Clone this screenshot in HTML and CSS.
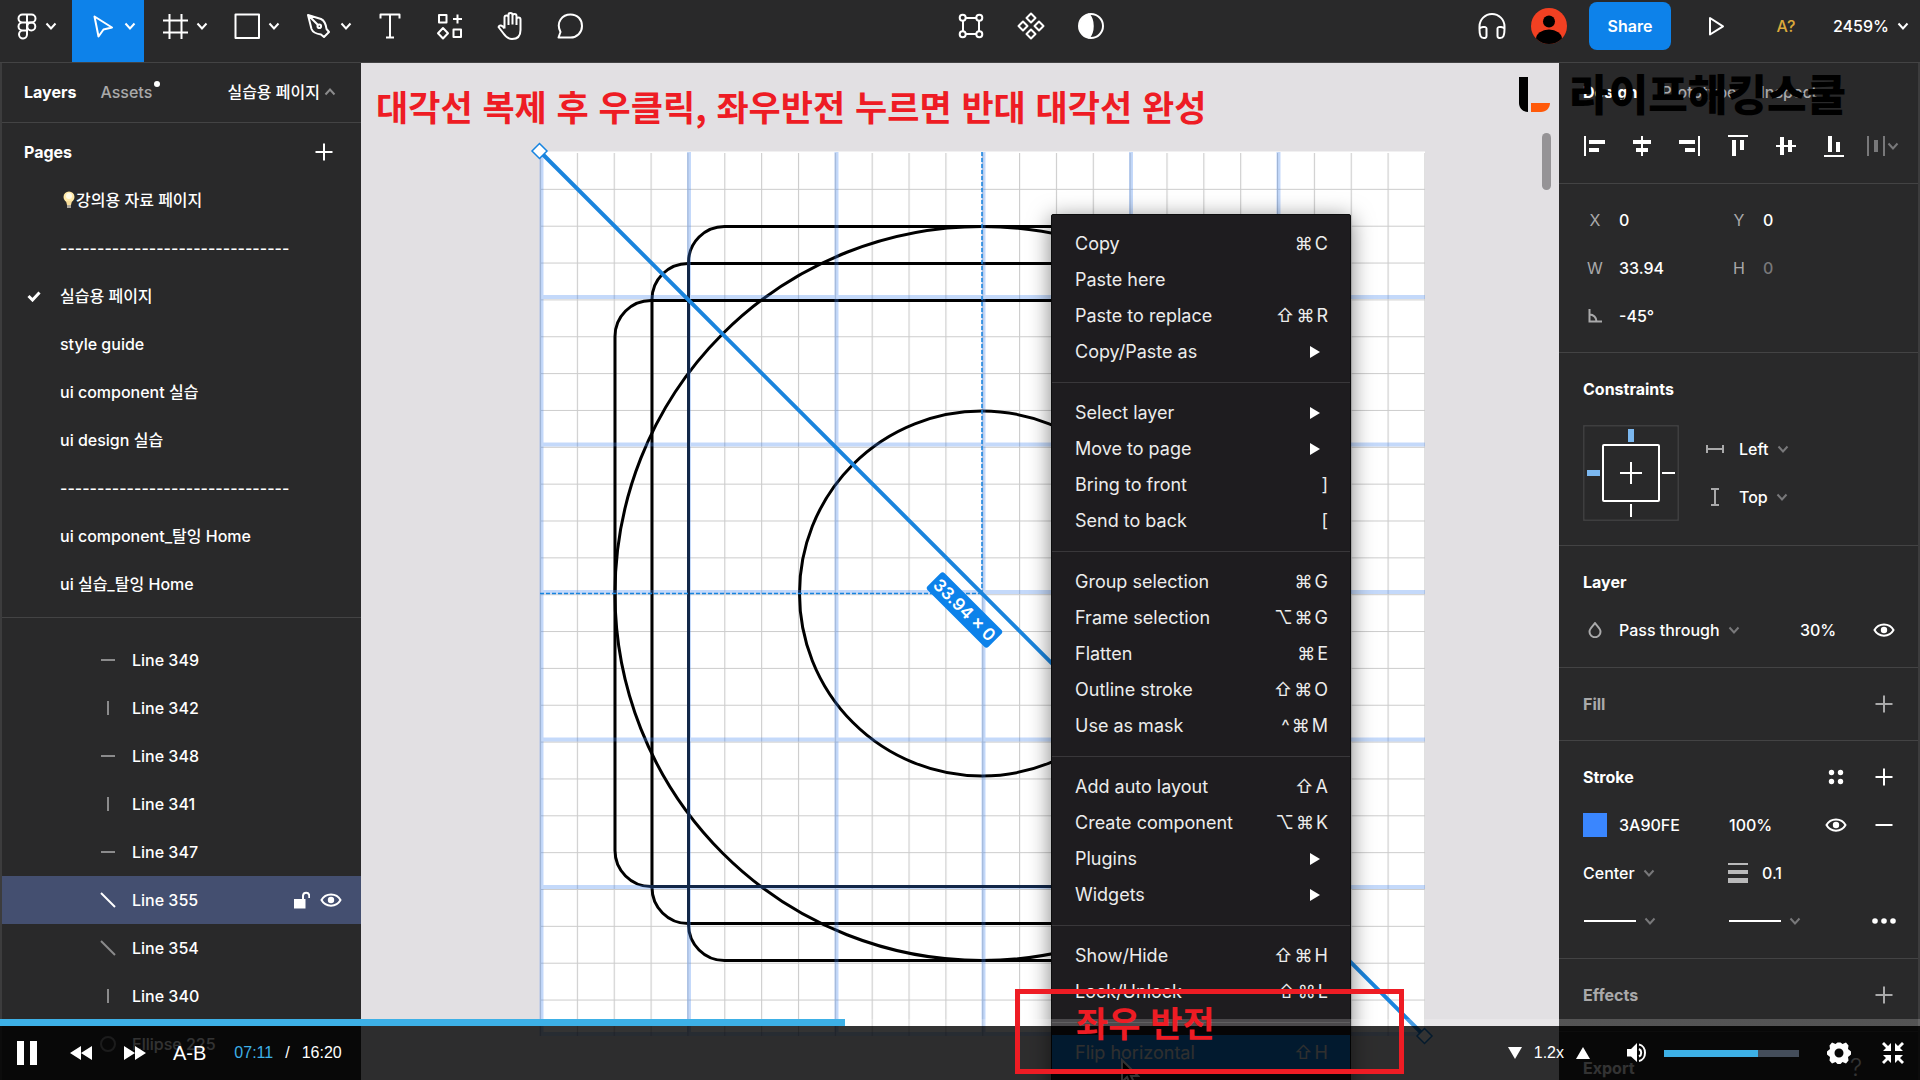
FILE: index.html
```html
<!DOCTYPE html>
<html lang="ko">
<head>
<meta charset="utf-8">
<title>아이콘 그리드 강의</title>
<link rel="stylesheet" href="styles.css">
</head>
<body>
<svg class="defs" aria-hidden="true">
  <symbol id="chev" viewBox="0 0 12 12"><path d="M1.500 3.500 6 8.500l4.500-5" /></symbol>
  <symbol id="plus" viewBox="0 0 20 20"><path d="M10 1.500v17M1.500 10h17"/></symbol>
  <symbol id="eye" viewBox="0 0 22 16"><path d="M1.500 8C5.500.5 16.500.5 20.500 8 16.500 15.500 5.500 15.500 1.500 8z"/><circle cx="11" cy="8" r="3.200" fill="currentColor" stroke="none"/></symbol>
  <symbol id="lh" viewBox="0 0 16 16"><path d="M1 8h14"/></symbol>
  <symbol id="lv" viewBox="0 0 16 16"><path d="M8 1v14"/></symbol>
  <symbol id="ld" viewBox="0 0 16 16"><path d="M1 1l14 14"/></symbol>
</svg>

<div class="app">
  <header class="topbar">
    <div class="tools">
      <button class="tool brand" aria-label="메뉴">
        <svg class="ic" viewBox="0 0 28 28"><path d="M14 2.500H9.500a4 4 0 0 0 0 8H14zM14 2.500h4.500a4 4 0 0 1 0 8H14zM14 10.500H9.500a4 4 0 0 0 0 8H14zM9.500 18.500a4 4 0 1 0 4.500 4v-4z"/><circle cx="18.300" cy="14.500" r="4"/></svg>
        <svg class="chev"><use href="#chev"/></svg>
      </button>
      <button class="tool wide active" aria-label="이동">
        <svg class="ic" viewBox="0 0 28 28"><path d="M5.500 4.500 23 15.500l-8.500 2-5 7z"/></svg>
        <svg class="chev"><use href="#chev"/></svg>
      </button>
      <button class="tool wide" aria-label="프레임">
        <svg class="ic" viewBox="0 0 28 28"><path d="M8.500 2v25M20.500 2v25M2 8.500h25M2 20.500h25"/></svg>
        <svg class="chev"><use href="#chev"/></svg>
      </button>
      <button class="tool wide" aria-label="도형">
        <svg class="ic" viewBox="0 0 28 28"><path d="M2.500 2.500h23.500v23.500H2.500z"/></svg>
        <svg class="chev"><use href="#chev"/></svg>
      </button>
      <button class="tool wide" aria-label="펜">
        <svg class="ic" viewBox="0 0 28 28"><path d="M3 3l13 4c4 2 5 6 5.500 10l2.500 3-5 5-3-2.500c-4-.5-8-1.500-9.500-5.500zM3 3l10 10"/><circle cx="14.300" cy="14.300" r="1.800"/></svg>
        <svg class="chev"><use href="#chev"/></svg>
      </button>
      <button class="tool" aria-label="텍스트">
        <svg class="ic" viewBox="0 0 28 28"><path d="M4.500 6.500V2.500h19v4M14 2.500v23M10 25.500h8"/></svg>
      </button>
      <button class="tool" aria-label="리소스">
        <svg class="ic" viewBox="0 0 28 28"><path d="M3 3h7.500v7.500H3zM17.500 17.500H25V25h-7.500zM7 16l5 5.200-5 5.300-5-5.300zM21.500 2.500v9M17 7h9"/></svg>
      </button>
      <button class="tool" aria-label="손">
        <svg class="ic" viewBox="0 0 28 28"><path d="M8.500 16.500V5.500a2 2 0 0 1 4 0V13M12.500 12V3a2 2 0 0 1 4 0v9.500M16.500 12V4a2 2 0 0 1 4 0v9M20.500 13V7.500a2 2 0 0 1 4 0V18c0 6-3.500 9-8.500 9-4.500 0-6.500-2.500-8.500-5.500l-5-6.500c1-2.500 3.500-2 6 1.500"/></svg>
      </button>
      <button class="tool" aria-label="댓글">
        <svg class="ic" viewBox="0 0 28 28"><path d="M2.500 25.500 4.500 20C-.5 10 6.500 2.500 14.500 2.500c7 0 11.500 5 11.500 11.500s-5 11.500-11.500 11.500z"/></svg>
      </button>
    </div>
    <div class="tools">
      <button class="tool" aria-label="개체 편집">
        <svg class="ic" viewBox="0 0 28 28"><path d="M8.500 6h11M8.500 22h11M6 8.500v11M22 8.500v11"/><circle cx="5.700" cy="5.700" r="3"/><circle cx="22.300" cy="5.700" r="3"/><circle cx="5.700" cy="22.300" r="3"/><circle cx="22.300" cy="22.300" r="3"/></svg>
      </button>
      <button class="tool" aria-label="컴포넌트">
        <svg class="ic" viewBox="0 0 28 28"><path d="M14 1.500 18.500 6 14 10.500 9.500 6zM14 17.500l4.500 4.500-4.500 4.500L9.500 22zM6 9.500l4.500 4.500L6 18.500 1.500 14zM22 9.500l4.500 4.500-4.500 4.500-4.500-4.500z"/></svg>
      </button>
      <button class="tool" aria-label="마스크">
        <svg class="ic" viewBox="0 0 28 28"><circle cx="14" cy="14" r="12"/><path d="M12 2.500c5 6 5 17 0 23a12 12 0 0 1 0-23z" fill="currentColor"/></svg>
      </button>
    </div>
    <div class="tools">
      <button class="tool" aria-label="오디오">
        <svg class="ic" viewBox="0 0 28 28"><path d="M1.500 17V14.500a12.500 12.500 0 0 1 25 0V17M1.500 17c0-1.500 7-3.500 7-.5v7.500c0 3-5 2.500-6 0-1-2-1-5-1-7zM26.500 17c0-1.500-7-3.500-7-.5v7.500c0 3 5 2.500 6 0 1-2 1-5 1-7z"/></svg>
      </button>
      <svg class="avatar" viewBox="0 0 36 36"><clipPath id="ac"><circle cx="18" cy="18" r="18"/></clipPath><g clip-path="url(#ac)"><path fill="#f24022" d="M0 0h36v36H0z"/><circle cx="18" cy="13.500" r="6"/><ellipse cx="18" cy="31" rx="13" ry="9.500"/></g></svg>
      <button class="share">Share</button>
      <button class="tool" aria-label="재생">
        <svg class="ic" viewBox="0 0 28 28"><path d="M8 6v16.500l13-8.200z"/></svg>
      </button>
      <button class="tool missing">A?</button>
      <label class="pick zoom"><select aria-label="확대"><option>2459%</option></select><svg class="chev"><use href="#chev"/></svg></label>
    </div>
  </header>

  <aside class="left">
    <div class="tabs">
      <button class="tab on">Layers</button>
      <button class="tab assets">Assets</button>
      <button class="tab page">실습용 페이지<svg class="chev up"><use href="#chev"/></svg></button>
    </div>
    <section class="pages">
      <div class="head"><h2>Pages</h2><button class="mini" aria-label="페이지 추가"><svg class="plus"><use href="#plus"/></svg></button></div>
      <ul>
        <li><svg class="bulb" viewBox="0 0 12 18"><circle cx="6" cy="6" r="5.500" fill="#ffe9a8"/><circle cx="6" cy="5" r="3" fill="#fffbe8"/><path d="M3 10h6l-1 4H4z" fill="#f6dc9a"/><path d="M4 14h4v3H4z" fill="#aaa59b"/></svg>강의용 자료 페이지</li>
        <li>-------------------------------</li>
        <li class="cur"><svg class="check" viewBox="0 0 14 12"><path d="M1.500 6l4 4 7-7.500"/></svg>실습용 페이지</li>
        <li>style guide</li>
        <li>ui component 실습</li>
        <li>ui design 실습</li>
        <li>-------------------------------</li>
        <li>ui component_탈잉 Home</li>
        <li>ui 실습_탈잉 Home</li>
      </ul>
    </section>
    <ul class="layers">
      <li><svg><use href="#lh"/></svg>Line 349</li>
      <li><svg><use href="#lv"/></svg>Line 342</li>
      <li><svg><use href="#lh"/></svg>Line 348</li>
      <li><svg><use href="#lv"/></svg>Line 341</li>
      <li><svg><use href="#lh"/></svg>Line 347</li>
      <li class="sel"><svg><use href="#ld"/></svg><span>Line 355</span>
        <button class="mini" aria-label="잠금"><svg class="lock" viewBox="0 0 16 18"><path d="M0 8h11.500v9.500H0z" fill="currentColor" stroke="none"/><path d="M9 8V4.500a3.200 3.200 0 0 1 6.300 0V7"/></svg></button>
        <button class="mini" aria-label="표시"><svg class="eye"><use href="#eye"/></svg></button></li>
      <li><svg><use href="#ld"/></svg>Line 354</li>
      <li><svg><use href="#lv"/></svg>Line 340</li>
      <li><svg viewBox="0 0 16 16"><circle cx="8" cy="8" r="7"/></svg>Ellipse 225</li>
    </ul>
  </aside>

  <main class="canvas">
    <svg class="board" width="1199" height="1017" viewBox="361 63 1199 1017">
      <defs>
        <pattern id="grid" x="540" y="152" width="36.850" height="36.850" patternUnits="userSpaceOnUse"><path d="M0 .5h37M.5 0v37" stroke="#000" stroke-opacity=".2" stroke-width="1.200"/></pattern>
      </defs>
      <path fill="#fff" d="M540 151.500h885V1036H540z"/>
      <path fill="url(#grid)" d="M540 153h885v883H540z"/>
      <g fill="none" stroke="#000" stroke-width="3">
        <rect x="688.500" y="226.500" width="587" height="734" rx="36"/>
        <rect x="652" y="263.500" width="660" height="660" rx="36"/>
        <rect x="615" y="300.500" width="734" height="586" rx="36"/>
        <circle cx="982" cy="593.500" r="367"/>
        <circle cx="982" cy="593.500" r="182.500"/>
      </g>
      <path stroke="#3a82f0" stroke-opacity=".3" stroke-width="4" d="M541.500 152v884M689 152v884M836.500 152v884M983.500 152v884M1131 152v884M1278.500 152v884M540 297h885M540 444.500h885M540 592h885M540 739.500h885M540 887h885M540 1034h885"/>
      <path stroke="#1784e0" stroke-width="1.500" stroke-dasharray="4 2" d="M982 152v441M540 593.500h442"/>
      <path stroke="#1a84dd" stroke-width="4" d="M539.500 151 1424.500 1036"/>
      <path fill="#fff" stroke="#1784e0" stroke-width="1.500" d="M539.500 143.500l7.500 7.500-7.500 7.500-7.500-7.500zM1424.500 1028.500l7.500 7.500-7.500 7.500-7.500-7.500z"/>
      <g transform="translate(964.500 610) rotate(45)"><rect x="-43" y="-12" width="86" height="24" rx="3" fill="#0d82ea"/><text class="size" y="6">33.94 × 0</text></g>
    </svg>
    <div class="scroll"></div>
    <p class="note">대각선 복제 후 우클릭, 좌우반전 누르면 반대 대각선 완성</p>

    <div class="menu" role="menu">
      <button role="menuitem">Copy<kbd><i>⌘</i><i>C</i></kbd></button>
      <button role="menuitem">Paste here</button>
      <button role="menuitem">Paste to replace<kbd><i>⇧</i><i>⌘</i><i>R</i></kbd></button>
      <button role="menuitem" class="sub">Copy/Paste as</button>
      <hr>
      <button role="menuitem" class="sub">Select layer</button>
      <button role="menuitem" class="sub">Move to page</button>
      <button role="menuitem">Bring to front<kbd>]</kbd></button>
      <button role="menuitem">Send to back<kbd>[</kbd></button>
      <hr>
      <button role="menuitem">Group selection<kbd><i>⌘</i><i>G</i></kbd></button>
      <button role="menuitem">Frame selection<kbd><i>⌥</i><i>⌘</i><i>G</i></kbd></button>
      <button role="menuitem">Flatten<kbd><i>⌘</i><i>E</i></kbd></button>
      <button role="menuitem">Outline stroke<kbd><i>⇧</i><i>⌘</i><i>O</i></kbd></button>
      <button role="menuitem">Use as mask<kbd><i>^</i><i>⌘</i><i>M</i></kbd></button>
      <hr>
      <button role="menuitem">Add auto layout<kbd><i>⇧</i><i>A</i></kbd></button>
      <button role="menuitem">Create component<kbd><i>⌥</i><i>⌘</i><i>K</i></kbd></button>
      <button role="menuitem" class="sub">Plugins</button>
      <button role="menuitem" class="sub">Widgets</button>
      <hr>
      <button role="menuitem">Show/Hide<kbd><i>⇧</i><i>⌘</i><i>H</i></kbd></button>
      <button role="menuitem">Lock/Unlock<kbd><i>⇧</i><i>⌘</i><i>L</i></kbd></button>
      <hr>
      <button role="menuitem" class="hot">Flip horizontal<kbd><i>⇧</i><i>H</i></kbd></button>
      <svg class="cursor" viewBox="0 0 20 30"><path d="M2 2v22l5-5 4 9 4-2-4-8h7z" fill="#000" stroke="#fff" stroke-width="2"/></svg>
    </div>
  </main>

  <aside class="right">
    <div class="tabs">
      <button class="tab on">Design</button>
      <button class="tab">Prototype</button>
      <button class="tab">Inspect</button>
    </div>
    <div class="align">
      <button aria-label="왼쪽"><svg viewBox="0 0 22 22"><path d="M1 1h2v20H1zM6 5h16v4H6zM6 13h10v4H6z"/></svg></button>
      <button aria-label="가로 가운데"><svg viewBox="0 0 22 22"><path d="M10 1h2v20h-2zM2 5h18v4H2zM5 13h12v4H5z"/></svg></button>
      <button aria-label="오른쪽"><svg viewBox="0 0 22 22"><path d="M19 1h2v20h-2zM0 5h16v4H0zM6 13h10v4H6z"/></svg></button>
      <button aria-label="위"><svg viewBox="0 0 22 22"><path d="M1 0h20v2H1zM5 5h4v16H5zM13 5h4v10h-4z"/></svg></button>
      <button aria-label="세로 가운데"><svg viewBox="0 0 22 22"><path d="M1 10h20v2H1zM5 2h4v18H5zM13 5h4v12h-4z"/></svg></button>
      <button aria-label="아래"><svg viewBox="0 0 22 22"><path d="M1 20h20v2H1zM5 1h4v16H5zM13 7h4v10h-4z"/></svg></button>
      <button class="dim" aria-label="간격"><svg viewBox="0 0 22 22"><path d="M2 1h2v20H2zM18 1h2v20h-2zM9 5h4v12H9z"/></svg><svg class="chev"><use href="#chev"/></svg></button>
    </div>
    <section class="grid">
      <label><span>X</span><input value="0"></label>
      <label><span>Y</span><input value="0"></label>
      <label><span>W</span><input value="33.94"></label>
      <label><span>H</span><input class="off" value="0"></label>
      <label><span><svg class="ang" viewBox="0 0 14 14"><path d="M1.500 0v12.500H14M1.500 5.500c4 0 7 3 7 7"/></svg></span><input aria-label="회전" value="-45°"></label>
    </section>
    <section>
      <div class="row"><h2>Constraints</h2></div>
      <div class="cons">
        <svg class="cbox" viewBox="0 0 96 96"><rect x=".5" y=".5" width="95" height="95" rx="2" fill="none" stroke="#3e3e3f"/><rect x="20" y="20" width="56" height="56" rx="1" fill="none" stroke="#fff" stroke-width="2"/><path fill="#7bb7ef" d="M45 4h6v13h-6zM4 45h13v6H4z"/><path stroke="#fff" stroke-width="2" d="M37 48h22M48 37v22M79 48h13M48 79v13"/></svg>
        <div class="picks">
          <label class="pick"><svg class="cic" viewBox="0 0 18 18"><path d="M1 5v8M17 5v8M1 9h16"/></svg><select aria-label="가로 제약"><option>Left</option></select><svg class="chev"><use href="#chev"/></svg></label>
          <label class="pick"><svg class="cic" viewBox="0 0 18 18"><path d="M5 1h8M5 17h8M9 1v16"/></svg><select aria-label="세로 제약"><option>Top</option></select><svg class="chev"><use href="#chev"/></svg></label>
        </div>
      </div>
    </section>
    <section class="roomy">
      <div class="row"><h2>Layer</h2></div>
      <div class="row">
        <label class="pick blend"><svg class="drop" viewBox="0 0 14 16"><path d="M7 1.200C9 4 12.500 6.500 12.500 9.700a5.500 5.500 0 0 1-11 0C1.500 6.500 5 4 7 1.200z"/></svg><select aria-label="혼합 모드"><option>Pass through</option></select><svg class="chev"><use href="#chev"/></svg></label>
        <input class="pct" aria-label="불투명도" value="30%">
        <button class="mini push" aria-label="표시"><svg class="eye"><use href="#eye"/></svg></button>
      </div>
    </section>
    <section>
      <div class="row"><h2 class="off">Fill</h2><button class="mini push off" aria-label="추가"><svg class="plus"><use href="#plus"/></svg></button></div>
    </section>
    <section class="roomy">
      <div class="row"><h2>Stroke</h2>
        <button class="mini push" aria-label="스타일"><svg class="dots4" viewBox="0 0 16 16"><circle cx="3.500" cy="3.500" r="2.700"/><circle cx="12.500" cy="3.500" r="2.700"/><circle cx="3.500" cy="12.500" r="2.700"/><circle cx="12.500" cy="12.500" r="2.700"/></svg></button>
        <button class="mini" aria-label="추가"><svg class="plus"><use href="#plus"/></svg></button></div>
      <div class="row"><span class="swatch"></span><input class="hex" aria-label="색상" value="3A90FE"><input class="pct" aria-label="색 불투명도" value="100%">
        <button class="mini push" aria-label="표시"><svg class="eye"><use href="#eye"/></svg></button>
        <button class="mini" aria-label="제거"><svg class="plus" viewBox="0 0 20 20"><path d="M1.500 10h17"/></svg></button></div>
      <div class="row"><label class="pick half"><select aria-label="정렬"><option>Center</option></select><svg class="chev"><use href="#chev"/></svg></label>
        <label class="weight"><svg viewBox="0 0 20 20"><path d="M0 0h20v2H0zM0 7h20v4H0zM0 15h20v5H0z"/></svg><input aria-label="두께" value="0.1"></label></div>
      <div class="row"><button class="pick half" aria-label="시작점"><span class="dash"></span><svg class="chev"><use href="#chev"/></svg></button>
        <button class="pick" aria-label="끝점"><span class="dash"></span><svg class="chev"><use href="#chev"/></svg></button>
        <button class="mini push" aria-label="더보기"><svg class="more" viewBox="0 0 24 6"><circle cx="3" cy="3" r="2.800"/><circle cx="12" cy="3" r="2.800"/><circle cx="21" cy="3" r="2.800"/></svg></button></div>
    </section>
    <section>
      <div class="row"><h2 class="off">Effects</h2><button class="mini push off" aria-label="추가"><svg class="plus"><use href="#plus"/></svg></button></div>
    </section>
    <section>
      <div class="row"><h2>Export</h2><span class="help">?</span></div>
    </section>
  </aside>
</div>

<div class="logo"><svg viewBox="0 0 32 36"><path d="M0 0h9v35C4 35 0 31 0 26z"/><path fill="#ff5a0a" d="M12 26h19c0 5-4 9-9 9H12z"/></svg><span>라이프해킹스쿨</span></div>

<footer class="player">
  <input type="range" class="seek" aria-label="재생 위치" min="0" max="1000" value="441">
  <div class="ctrls">
    <button class="pause" aria-label="일시정지"><svg viewBox="0 0 20 24"><path d="M0 0h7v24H0zM13 0h7v24h-7z"/></svg></button>
    <button class="rew" aria-label="뒤로"><svg viewBox="0 0 22 14"><path d="M11 0v14L0 7zM22 0v14L11 7z"/></svg></button>
    <button class="fwd" aria-label="앞으로"><svg viewBox="0 0 22 14"><path d="M11 0v14l11-7zM0 0v14l11-7z"/></svg></button>
    <button class="ab">A-B</button>
    <span class="time"><b>07:11</b><span>/</span><span>16:20</span></span>
    <span class="speed">
      <button aria-label="느리게"><svg viewBox="0 0 14 12"><path d="M0 0h14L7 12z"/></svg></button>
      <span>1.2x</span>
      <button aria-label="빠르게"><svg viewBox="0 0 14 12"><path d="M0 12h14L7 0z"/></svg></button>
    </span>
    <button class="mute" aria-label="음소거"><svg viewBox="0 0 20 20"><path d="M0 6h4l6-6v19l-6-5.500H0z"/><path d="M12 6c3 1.500 3 6 0 7.500M12 1.500c8 1.500 8 15 0 16.500" fill="none" stroke="#fff" stroke-width="2"/></svg></button>
    <input type="range" class="vol" aria-label="음량" min="0" max="100" value="70">
    <button class="gear" aria-label="설정"><svg viewBox="0 0 24 24"><path fill-rule="evenodd" d="M5 1.500 8.500 3l2-1.500h3l2 1.500L19 1.500l2.500 3-.5 3.500 3 2.500v3L21 16l.5 3.500-2.500 3-3.500-1.500-2 2h-3l-2-2L5 22.500l-2.500-3L3 16l-3-2.500v-3L3 8l-.5-3.500zM12 7.500a4.500 4.500 0 1 0 0 9 4.500 4.500 0 0 0 0-9z"/></svg></button>
    <button class="full" aria-label="전체 화면 종료"><svg viewBox="0 0 22 22"><path d="M9 9H1l3-3-4-4 2-2 4 4 3-3zM13 9V1l3 3 4-4 2 2-4 4 3 3zM9 13v8l-3-3-4 4-2-2 4-4-3-3zM13 13h8l-3 3 4 4-2 2-4-4-3 3z"/></svg></button>
  </div>
</footer>
<div class="callout">좌우 반전</div>
</body>
</html>
```
FILE: styles.css
```css
* { box-sizing: border-box; }
html, body { height: 100%; }
body {
  margin: 0;
  position: relative;
  overflow: hidden;
  background: #e2e0e3;
  color: #fff;
  font: 500 16px/24px Inter, "Noto Sans CJK KR", sans-serif;
}
button, input, select {
  font: inherit; color: inherit; background: none;
  border: 0; margin: 0; padding: 0; outline: 0;
}
select { appearance: none; }
input { min-width: 0; }
h2 { margin: 0; font-size: 16px; font-weight: 700; }
ul { list-style: none; margin: 0; padding: 0; }
svg { display: block; flex: none; fill: none; stroke: currentColor; stroke-width: 2; }
.defs { position: absolute; width: 0; height: 0; }
.off { color: #a9a9aa; }

.app {
  height: 100vh;
  display: grid;
  grid-template: 63px minmax(0, 1fr) / 361px minmax(0, 1fr) 361px;
}

/* toolbar */
.topbar {
  grid-column: 1 / -1;
  display: flex;
  justify-content: space-between;
  background: #29292a;
  border-bottom: 1px solid #434344;
}
.tools { display: flex; align-items: stretch; }
.tool {
  width: 60px;
  padding-bottom: 10px;
  display: flex;
  align-items: center;
  justify-content: center;
}
.tool.wide, .tool.brand { width: 72px; gap: 7px; justify-content: flex-start; padding-left: 17px; }
.tool.brand { gap: 4px; padding-left: 13px; }
.tool.active { background: #0d82ea; }
.ic { width: 28px; height: 28px; stroke-linejoin: round; }
.chev { width: 12px; height: 12px; }
.up { transform: rotate(180deg); }
.avatar { width: 36px; height: 36px; stroke: none; fill: #000; margin: 8px 22px 0 9px; }
.share {
  width: 82px; height: 48px; margin: 2px 15px 0 0;
  border-radius: 8px; background: #0d82ea; font-weight: 600;
}
.missing { margin-left: 10px; color: #dba93b; }
.pick { display: flex; align-items: center; gap: 8px; }
.pick .chev { color: #78787a; }
.zoom { margin: 0 11px 10px 17px; }
.zoom .chev { color: #fff; }

/* side panels */
.left, .right { background: #29292a; overflow: hidden; min-height: 0; }
.left { border-left: 2px solid #3c3c3d; }
.right { border-right: 2px solid #3c3c3d; }
.tabs { display: flex; align-items: center; height: 60px; gap: 24px; padding: 0 25px 2px 22px; }
.left .tabs { border-bottom: 1px solid #434344; }
.tab { color: #a9a9aa; font-weight: 500; }
.tab.on { color: #fff; font-weight: 700; }
.assets { position: relative; }
.assets::after {
  content: ""; position: absolute; right: -8px; top: 1px;
  width: 6px; height: 6px; border-radius: 50%; background: #fff;
}
.page { margin-left: auto; color: #fff; display: flex; align-items: center; gap: 4px; }
.page .chev { color: #8b8b8c; }
.mini { width: 32px; height: 32px; display: flex; align-items: center; justify-content: center; }
.plus { width: 20px; height: 20px; }
.eye { width: 22px; height: 16px; }

.pages { border-bottom: 1px solid #434344; padding: 4px 0 9px; }
.pages .head { display: flex; align-items: center; justify-content: space-between; height: 49px; padding: 0 21px 0 22px; }
.pages li, .layers li { height: 48px; display: flex; align-items: center; }
.pages li { padding-left: 58px; }
.pages .cur { padding-left: 25px; }
.check { width: 14px; height: 12px; margin-right: 19px; stroke-width: 3; }
.bulb { width: 12px; height: 18px; margin: 0 1px 0 3px; stroke: none; }
.layers { padding-top: 18px; }
.layers li { padding: 0 16px 0 98px; gap: 16px; color: #fff; }
.layers li > svg { width: 16px; height: 16px; color: #8b8b8c; }
.layers .sel { background: #444f70; gap: 0; }
.layers .sel > svg { color: #fff; margin-right: 16px; }
.sel span { margin-right: auto; }
.lock { width: 16px; height: 18px; }
.sel .mini { width: 29px; }

/* canvas */
.canvas { position: relative; overflow: hidden; background: #e2e0e3; }
.board { position: absolute; left: 0; top: 0; stroke: none; }
.size { fill: #fff; font-size: 17px; font-weight: 600; text-anchor: middle; }
.scroll {
  position: absolute; right: 8px; top: 70px;
  width: 9px; height: 57px; border-radius: 5px; background: #959396;
}
.note, .callout {
  margin: 0; color: #ee1c24; white-space: nowrap;
  font: 700 35px/44px "Noto Sans CJK KR", sans-serif;
}
.note { position: absolute; left: 15px; top: 21px; }

.menu {
  position: absolute; left: 690px; top: 151px;
  width: 300px; padding: 11px 0 30px;
  border: 1px solid #0d0d0e; border-radius: 2px;
  background: #1e1c1f;
  box-shadow: 0 4px 22px rgba(0, 0, 0, .5);
  color: #ececec;
  font-size: 18px; font-weight: 400;
}
.menu button {
  width: 100%; height: 36px; padding: 0 22px 0 23px;
  display: flex; align-items: center; justify-content: space-between;
}
.menu hr { border: 0; height: 1px; background: #39373a; margin: 12px 0; }
.menu kbd { font: inherit; display: flex; gap: 2px; }
.menu i { font-style: normal; }
.sub::after {
  content: ""; margin-right: 8px;
  border: solid transparent; border-width: 6px 0 6px 10px; border-left-color: #fff;
}
.menu .hot { background: #0d82ea; }
.cursor { position: absolute; left: 68px; top: 843px; width: 20px; height: 30px; }

/* inspector */
.right .tabs { padding: 0 24px 2px; }
.right section, .align { border-bottom: 1px solid #434344; }
.right section { padding: 12px 0; }
.right .roomy { padding-bottom: 13px; }
.align { display: flex; padding: 0 0 15px 11px; height: 61px; }
.align button { width: 48px; display: flex; align-items: center; justify-content: center; }
.align svg { width: 22px; height: 22px; fill: currentColor; stroke: none; }
.align .chev { width: 12px; height: 12px; fill: none; stroke: currentColor; }
.align .dim { color: #78787a; }
.right .grid { display: grid; grid-template-columns: 144px 144px; padding-left: 24px; }
.grid label { height: 48px; display: flex; align-items: center; }
.grid span { width: 24px; margin-right: 12px; color: #a9a9aa; font-weight: 400; display: flex; justify-content: center; }
.grid input { width: 80px; }
.grid .off { color: #78787a; }
.ang { width: 14px; height: 14px; }
.row { height: 48px; display: flex; align-items: center; padding: 0 18px 0 24px; }
.row .mini { margin-left: 16px; }
.row .push { margin-left: auto; }
.cons { display: flex; padding: 12px 24px; gap: 27px; }
.cbox { width: 96px; height: 96px; stroke: none; }
.picks { display: grid; }
.picks .pick { height: 48px; }
.cic { width: 18px; height: 18px; margin-right: 7px; color: #a9a9aa; }
.blend { width: 180px; }
.drop { width: 14px; height: 16px; margin: 0 9px 0 5px; color: #a9a9aa; }
.pct { width: 60px; margin-left: 37px; }
.swatch { width: 24px; height: 24px; background: #3a86fe; }
.hex { width: 73px; margin-left: 12px; }
.swatch ~ .pct { width: 56px; }
.half { width: 145px; }
.dots4 { width: 16px; height: 16px; fill: currentColor; stroke: none; }
.more { width: 24px; height: 6px; fill: currentColor; stroke: none; }
.weight { display: flex; align-items: center; gap: 14px; }
.weight svg { width: 20px; height: 20px; fill: #b9b9ba; stroke: none; }
.weight input { width: 60px; }
.dash { width: 52px; height: 2px; background: #fff; margin-left: 1px; }
.help { margin-left: auto; margin-right: 38px; font-size: 24px; font-weight: 300; }

/* watermark */
.logo {
  position: absolute; right: 74px; top: 64px; z-index: 1;
  display: flex; align-items: center; gap: 18px;
  color: #000; font: 900 43px/56px "Noto Sans CJK KR", sans-serif;
}
.logo svg { width: 32px; height: 36px; margin-top: 6px; fill: #000; stroke: none; }

/* player */
.player { position: absolute; left: 0; right: 0; bottom: 0; z-index: 2; font: 400 16px/24px "Liberation Sans", Arial, sans-serif; }
.seek, .vol { appearance: none; display: block; height: 7px; }
.seek { width: 100%; background: linear-gradient(to right, #3db0e6 44%, rgba(255, 255, 255, .2) 44%); }
.vol { width: 135px; background: linear-gradient(to right, #3db0e6 70%, #444d5a 70%); }
.seek::-webkit-slider-thumb, .vol::-webkit-slider-thumb { appearance: none; width: 0; height: 0; }
.ctrls { height: 54px; background: rgba(0, 0, 0, .8); display: flex; align-items: center; padding: 0 16px 0 17px; }
.ctrls svg { fill: #fff; stroke: none; }
.pause svg { width: 20px; height: 24px; }
.rew { margin-left: 33px; }
.fwd { margin-left: 32px; }
.rew svg, .fwd svg { width: 22px; height: 14px; }
.ab { margin-left: 27px; font-size: 20px; }
.time { display: flex; gap: 12px; margin-left: 28px; }
.time b { font-weight: 400; color: #3db0e6; }
.speed { display: flex; align-items: center; gap: 12px; margin-left: auto; }
.speed svg { width: 14px; height: 12px; }
.mute { margin: 0 17px 0 37px; }
.mute svg { width: 20px; height: 20px; }
.gear { margin-left: 28px; }
.gear svg { width: 24px; height: 24px; }
.full { margin-left: 31px; }
.full svg { width: 22px; height: 22px; }
.callout {
  position: absolute; left: 1015px; bottom: 6px; z-index: 3;
  width: 389px; height: 85px; padding: 6px 56px;
  border: 5px solid #ee1c24;
}
```
